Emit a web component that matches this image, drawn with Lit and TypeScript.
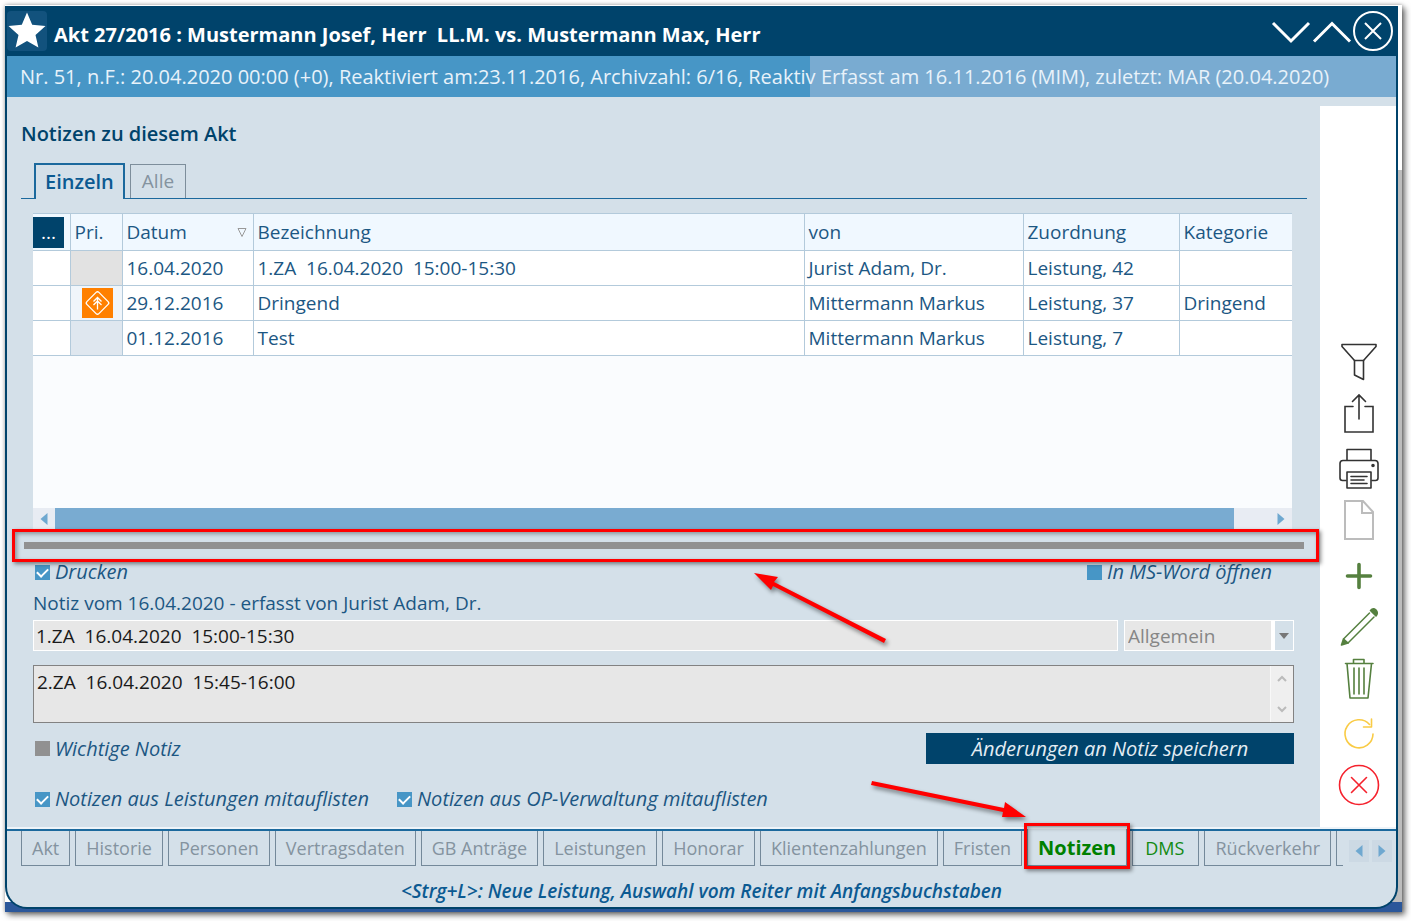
import { LitElement, html, css, svg } from "lit";
import { customElement, state } from "lit/decorators.js";
import { classMap } from "lit/directives/class-map.js";

interface Note {
  date: string;
  title: string;
  author: string;
  link: string;
  category: string;
  priority: "none" | "urgent" | "plain";
}

const NOTES: Note[] = [
  { date: "16.04.2020", title: "1.ZA  16.04.2020  15:00-15:30", author: "Jurist Adam, Dr.", link: "Leistung, 42", category: "", priority: "none" },
  { date: "29.12.2016", title: "Dringend", author: "Mittermann Markus", link: "Leistung, 37", category: "Dringend", priority: "urgent" },
  { date: "01.12.2016", title: "Test", author: "Mittermann Markus", link: "Leistung, 7", category: "", priority: "plain" },
];

const SECTIONS = [
  "Akt", "Historie", "Personen", "Vertragsdaten", "GB Anträge", "Leistungen", "Honorar",
  "Klientenzahlungen", "Fristen", "Notizen", "DMS", "Rückverkehr",
];

const icon = (body: unknown, label: string, cls: string) => html`
  <button class="tool ${cls}" aria-label=${label}>
    <svg viewBox="0 0 42 42" width="42" height="42" fill="none" stroke="currentColor" stroke-width="1.6"
      stroke-linejoin="round" stroke-linecap="round">${body}</svg>
  </button>`;

const FILTER = svg`<path d="M4 3.5H38V5.5L25.5 19.5H16.5L4 5.500Z"/><path d="M16.500 19.500V34L25.500 38.500V19.500"/>`;
const EXPORT = svg`<path d="M15 14.500H7V40H35V14.500H27M21 27V3M14.500 9.500L21 3L27.500 9.500" stroke-linejoin="miter"/>`;
const PRINT = svg`<path d="M9 12.500V1.500H33V12.500M8 32.500H4.500Q2 32.500 2 30V15.500Q2 12.500 5 12.500H37Q40 12.500 40 15.500V30Q40 32.500 37.500 32.500H34"/>
  <path d="M9 24H33V40H9Z"/><path d="M13 28.500H29M13 32H26M13 35.500H29"/><circle cx="35" cy="17.500" r="1" fill="currentColor"/>`;
const PAGE = svg`<path d="M7 2H25L35 13V40H7ZM24 2V14H35" stroke-width="2" stroke-linejoin="miter"/>`;
const PLUS = svg`<path d="M21 9.500V32.500M9.500 21H32.500" stroke-width="3.600"/>`;
const PENCIL = svg`<path d="M5.500 33L31.500 7M10 37L36 11" stroke-width="1.500"/>
  <path d="M32.500 4.500Q35 1.500 38 4Q40.500 7 38 10ZM3.500 39L5.500 33L10 37Z" fill="currentColor"/>`;
const TRASH = svg`<path d="M7.500 6.500H35M9 6.500L12 41H30L33.500 6.500M15.500 6V2.500H26V6M16 11V37M21 11V37M26 11V37"/>`;
const RELOAD = svg`<path d="M35 21A14 14 0 1 1 31.500 11.500M33.500 6V14H25.500"/>`;
const CANCEL = svg`<circle cx="21" cy="21" r="19.500"/><path d="M13.500 13.500L28.500 28.500M28.500 13.500L13.500 28.500"/>`;

@customElement("app-root")
export class AppRoot extends LitElement {
  @state() private view = "Einzeln";
  @state() private section = "Notizen";

  static styles = css`
    :host { display: block; font: 19px/26px "Open Sans", "Noto Sans", sans-serif; color: #1c5783; }
    * { box-sizing: border-box; }
    button, input, select, textarea { font: inherit; color: inherit; margin: 0; border-radius: 0; }
    button { background: none; border: 0; padding: 0; cursor: pointer; }
    svg { display: block; }

    .page { min-height: 100vh; display: flex; flex-direction: column; padding: 5px 9px 9px 5px; background: #fff; }
    .desktop {
      flex: 1; display: flex; flex-direction: column; padding: 1px 4px 3px 0;
      background: linear-gradient(#2b579a, #2b579a) bottom / 100% 10px no-repeat,
        linear-gradient(#fff 165px, #bdbdbd 165px) right / 20px 100% no-repeat, #fff;
      box-shadow: 3px 3px 6px rgba(0, 0, 0, .55), 0 0 4px rgba(0, 0, 0, .3);
    }
    .window {
      flex: 1; display: flex; flex-direction: column; position: relative; overflow: hidden;
      border: 2px solid #00436b; border-top: 0; border-radius: 0 0 22px 22px; background: #d4e0e9;
    }

    .title { height: 50px; display: flex; align-items: center; gap: 7px; background: #00436b; color: #fff; padding-right: 3px; }
    .star { width: 40px; height: 40px; border-radius: 4px; background: #12527d; }
    .title h1 { flex: 1; margin: 8px 0 0; font-size: 20px; font-weight: 700; white-space: pre; }
    .controls { display: flex; }

    .status { display: grid; grid-template-columns: 803fr 586fr; height: 41px; font-size: 20px; line-height: 42px; color: #e8f2fa; background: linear-gradient(90deg, #4796c6 0 57.8%, #79abd1 57.8%); }
    .status span { min-width: 0; white-space: nowrap; }
    .status .left { padding-left: 13px; }
    .status .right { padding-left: 11px; }

    .body { flex: 1; display: grid; grid-template-columns: 1fr 76px; }
    .main { display: flex; flex-direction: column; padding: 24px 0 20px; }
    .main h2 { margin: 0 0 16px 14px; font-size: 20px; line-height: 26px; font-weight: 600; color: #00436b; }

    .views { display: flex; align-items: flex-end; gap: 5px; height: 36px; margin: 0 13px 14px 14px; padding-left: 13px; border-bottom: 1px solid #1b699d; }
    .view { height: 34px; padding: 0 11px 2px; border: 1px solid #7d8e9b; border-bottom: 0; color: #84939f; }
    .view.active { height: 36px; margin-bottom: -1px; padding: 0 9px; border: 2px solid #1b699d; border-bottom: 0; background: #d4e0e9; color: #0b5a92; font-size: 20px; font-weight: 600; }

    .list { flex: 1; display: flex; flex-direction: column; margin: 0 28px 0 26px; background: #fafcfe; }
    table { width: 100%; table-layout: fixed; border-collapse: collapse; }
    th, td { height: 35px; padding: 0 3px 0 4px; text-align: left; font-weight: 400; white-space: pre; border: 1px solid #b3cadb; overflow: hidden; }
    th { height: 37px; background: #f0f8ff; }
    td { background: #fff; }
    th:first-child, td:first-child { border-left: 0; padding: 0; }
    th:last-child, td:last-child { border-right: 0; }
    .c-menu { width: 37px; } .c-pri { width: 52px; } .c-date { width: 131px; }
    .c-author { width: 219px; } .c-link { width: 156px; } .c-cat { width: 113px; }
    .menu { display: block; width: 31px; height: 31px; background: #00436b; color: #fff; line-height: 26px; }
    .sortable { display: flex; justify-content: space-between; align-items: center; padding-right: 3px; }
    .pri { padding: 0 0 0 11px; }
    .pri.none { background: #e2e2e2; } .pri.plain { background: #dfe7ef; } .pri.urgent { background: #f0f5fa; }
    .scroll { display: flex; height: 21px; margin-top: auto; background: #e8ecf3; }
    .scroll button { width: 22px; display: grid; place-items: center; color: #6fa8d0; }
    .thumb { flex: 1; margin-right: 36px; background: #79abd1; }

    .splitter { position: relative; height: 33px; padding: 13px 16px 13px 17px; }
    .splitter hr { height: 7px; margin: 0; border: 0; background: #919191; }
    .mark { position: absolute; border: 3px solid #f00; box-shadow: 2px 2px 4px rgba(0, 0, 0, .45), inset 2px 2px 4px rgba(0, 0, 0, .35); pointer-events: none; }
    .mark.around-splitter { inset: 0 1px 0 5px; }
    .mark.around-tab { inset: -6px -4px -4px -4px; z-index: 1; }
    .arrow { position: absolute; overflow: visible; filter: drop-shadow(2px 3px 2px rgba(0, 0, 0, .45)); pointer-events: none; }
    .arrow.one { left: 747px; bottom: 264px; }
    .arrow.two { left: 864px; bottom: 88px; }

    .form { display: flex; flex-direction: column; padding: 0 26px; }
    .row { display: flex; justify-content: space-between; align-items: center; }
    .check { display: flex; align-items: center; gap: 5px; padding-left: 2px; height: 20px; font-size: 20px; font-style: italic; line-height: 20px; white-space: nowrap; }
    .check input { appearance: none; width: 15px; height: 15px; background: #4796c6; display: grid; place-items: center; }
    .check input:checked::after { content: ""; width: 9px; height: 5px; margin-top: -2px; border: solid #fff; border-width: 0 0 2px 2px; transform: rotate(-45deg); }
    .check.muted input { background: #919191; }
    .word { padding-right: 22px; }
    .caption { margin: 8px 0 4px; }
    .fields { gap: 6px; }
    .subject { flex: 1; min-width: 0; height: 31px; padding: 0 2px; border: 1px solid #fff; background: #e7e7e7; color: #1a1a1a; }
    .select { display: flex; position: relative; width: 170px; }
    .select select { appearance: none; width: 100%; height: 31px; padding: 0 3px; border: 1px solid #fff; background: #e7e7e7; color: #868686; }
    .drop { position: absolute; right: 1px; top: 1px; bottom: 1px; width: 22px; display: grid; place-items: center; border-left: 4px solid #fff; background: #d4e0e9; pointer-events: none; }
    .memo { display: flex; height: 58px; margin: 14px 0 10px; border: 1px solid #828282; background: #e7e7e7; }
    .memo textarea { flex: 1; resize: none; border: 0; padding: 3px 3px; background: transparent; color: #1a1a1a; overflow: hidden; outline: 0; white-space: pre; }
    .memo-scroll { width: 23px; display: flex; flex-direction: column; justify-content: space-between; align-items: center; padding: 9px 0; background: #efefef; border-left: 1px solid #f8f8f8; }
    .save { width: 368px; height: 31px; background: #00436b; color: #e4edf4; font-size: 20px; font-style: italic; text-align: center; }
    .options { display: flex; gap: 26px; margin-top: 25px; }

    .tools { display: flex; flex-direction: column; align-items: center; gap: 9px; margin-top: 9px; padding: 0 0 23px 2px; background: #fff; justify-content: flex-end; }
    .tool { color: #333; }
    .tool.grey { color: #bcbcbc; } .tool.green { color: #55803f; } .tool.yellow { color: #f9cb45; } .tool.red { color: #f5222d; }
    .tool.low { margin-top: 5px; }

    .nav { display: flex; gap: 5px; position: relative; padding-left: 14px; border-top: 2px solid #1b699d; box-shadow: 0 -2px #eef4f9; font-size: 18px; }
    .tab { position: relative; height: 35px; padding: 0 10px; line-height: 35px; border: 1px solid #74899a; border-top: 0; color: #84939f; white-space: nowrap; flex: none; }
    .tab.linked { color: #128a12; padding: 0 14px 0 12px; }
    .tab.active { color: #008000; font-size: 20px; font-weight: 700; margin-top: -2px; height: 37px; padding: 0 10px; background: #d4e0e9; }
    .tab.more { width: 7px; padding: 0; border-right: 0; }
    .pager { position: absolute; right: 4px; top: 9px; display: flex; gap: 3px; }
    .pager button { width: 20px; height: 22px; display: grid; place-items: center; background: #ccd9e4; color: #6fa8d0; }
    .hint { margin: 0; padding: 15px 0 6px; line-height: 20px; text-align: center; font-weight: 600; font-style: italic; color: #0b5a92; }
  `;

  private check(label: string, checked: boolean, cls = "") {
    return html`<label class="check ${cls}"><input type="checkbox" .checked=${checked} />${label}</label>`;
  }

  private triangle(dir: "left" | "right") {
    return html`<svg width="8" height="12" fill="currentColor"><path d=${dir === "left" ? "M7.500 0V12L0.500 6Z" : "M0.500 0V12L7.500 6Z"} /></svg>`;
  }

  private row(n: Note) {
    return html`<tr>
      <td></td>
      <td class="pri ${n.priority}">${n.priority === "urgent"
        ? html`<svg width="31" height="30" viewBox="0 0 31 30" fill="none" stroke="#fff" stroke-width="1.300">
            <rect width="31" height="30" fill="#ff8000" stroke="none" />
            <rect x="7" y="6.500" width="17" height="17" rx="2" transform="rotate(45 15.500 15)" />
            <path d="M11.500 13.500L15.500 9.500L19.500 13.500M11.500 17L15.500 13L19.500 17M15.500 10V21.500" />
          </svg>` : ""}</td>
      <td>${n.date}</td><td>${n.title}</td><td>${n.author}</td><td>${n.link}</td><td>${n.category}</td>
    </tr>`;
  }

  render() {
    return html`<div class="page"><div class="desktop"><div class="window">
      <header class="title">
        <svg class="star" viewBox="0 0 40 40"><path fill="#fff" d="M20 1.500L25.200 13.700L38.500 15L28.500 23.900L31.400 36.500L20 30L8.600 36.500L11.500 23.900L1.500 15L14.800 13.700Z" /></svg>
        <h1>${"Akt 27/2016 : Mustermann Josef, Herr  LL.M. vs. Mustermann Max, Herr"}</h1>
        <div class="controls">
          <button aria-label="Nächster Akt"><svg width="41" height="42" fill="none" stroke="#fff" stroke-width="3"><path d="M2 13L20 31L38 13" /></svg></button>
          <button aria-label="Voriger Akt"><svg width="41" height="42" fill="none" stroke="#fff" stroke-width="3"><path d="M2 31.500L20 13.500L38 31.500" /></svg></button>
          <button aria-label="Schließen"><svg width="40" height="42" fill="none" stroke="#fff" stroke-width="2"><circle cx="20" cy="21" r="19" /><path d="M12 13L28 29M28 13L12 29" /></svg></button>
        </div>
      </header>
      <div class="status">
        <span class="left">Nr. 51, n.F.: 20.04.2020 00:00 (+0), Reaktiviert am:23.11.2016, Archivzahl: 6/16, Reaktiv</span>
        <span class="right">Erfasst am 16.11.2016 (MIM), zuletzt: MAR (20.04.2020)</span>
      </div>
      <div class="body">
        <main class="main">
          <h2>Notizen zu diesem Akt</h2>
          <div class="views">
            ${["Einzeln", "Alle"].map((v) => html`<button class=${classMap({ view: true, active: v === this.view })} @click=${() => (this.view = v)}>${v}</button>`)}
          </div>
          <div class="list">
            <table>
              <colgroup><col class="c-menu" /><col class="c-pri" /><col class="c-date" /><col /><col class="c-author" /><col class="c-link" /><col class="c-cat" /></colgroup>
              <thead><tr>
                <th><button class="menu">...</button></th>
                <th>Pri.</th>
                <th><div class="sortable">Datum<svg width="10" height="11" fill="none" stroke="#999"><path d="M1 1.500H9L5 9.500Z" /></svg></div></th>
                <th>Bezeichnung</th><th>von</th><th>Zuordnung</th><th>Kategorie</th>
              </tr></thead>
              <tbody>${NOTES.map((n) => this.row(n))}</tbody>
            </table>
            <div class="scroll">
              <button aria-label="Nach links">${this.triangle("left")}</button>
              <div class="thumb"></div>
              <button aria-label="Nach rechts">${this.triangle("right")}</button>
            </div>
          </div>
          <div class="splitter"><hr /><div class="mark around-splitter"></div></div>
          <div class="form">
            <div class="row">${this.check("Drucken", true)}${this.check("In MS-Word öffnen", false, "word")}</div>
            <label class="caption" for="subject">Notiz vom 16.04.2020 - erfasst von Jurist Adam, Dr.</label>
            <div class="row fields">
              <input class="subject" id="subject" type="text" .value=${"1.ZA  16.04.2020  15:00-15:30"} />
              <div class="select">
                <select aria-label="Kategorie"><option>Allgemein</option></select>
                <div class="drop"><svg width="10" height="6" fill="#777"><path d="M0 0H10L5 6Z" /></svg></div>
              </div>
            </div>
            <div class="memo">
              <textarea aria-label="Notiztext" .value=${"2.ZA  16.04.2020  15:45-16:00"}></textarea>
              <div class="memo-scroll">
                <svg width="10" height="7" fill="none" stroke="#bbb" stroke-width="2"><path d="M1 6L5 2L9 6" /></svg>
                <svg width="10" height="7" fill="none" stroke="#bbb" stroke-width="2"><path d="M1 1L5 5L9 1" /></svg>
              </div>
            </div>
            <div class="row">${this.check("Wichtige Notiz", false, "muted")}<button class="save">Änderungen an Notiz speichern</button></div>
            <div class="options">${this.check("Notizen aus Leistungen mitauflisten", true)}${this.check("Notizen aus OP-Verwaltung mitauflisten", true)}</div>
          </div>
        </main>
        <aside class="tools">
          ${icon(FILTER, "Filtern", "")}
          ${icon(EXPORT, "Exportieren", "")}
          ${icon(PRINT, "Drucken", "low")}
          ${icon(PAGE, "Neues Dokument", "grey")}
          ${icon(PLUS, "Hinzufügen", "green low")}
          ${icon(PENCIL, "Bearbeiten", "green")}
          ${icon(TRASH, "Löschen", "green")}
          ${icon(RELOAD, "Aktualisieren", "yellow low")}
          ${icon(CANCEL, "Abbrechen", "red")}
        </aside>
      </div>
      <nav class="nav">
        ${SECTIONS.map((s) => html`<button class=${classMap({ tab: true, active: s === this.section, linked: s === "DMS" })}
          @click=${() => (this.section = s)}>${s}${s === "Notizen" ? html`<span class="mark around-tab"></span>` : ""}</button>`)}
        <button class="tab more" aria-label="Weitere"></button>
        <div class="pager">
          <button aria-label="Zurück">${this.triangle("left")}</button>
          <button aria-label="Weiter">${this.triangle("right")}</button>
        </div>
      </nav>
      <p class="hint">&lt;Strg+L&gt;: Neue Leistung, Auswahl vom Reiter mit Anfangsbuchstaben</p>
      <svg class="arrow one" width="134" height="70" fill="#f00"><path d="M0 0L24 4L20 9L132 66L130 70L19 13L17 17Z" /></svg>
      <svg class="arrow two" width="156" height="38" fill="#f00"><path d="M1 0L133 27L134 21L155 36L131 36L132 31L0 4Z" /></svg>
    </div></div></div>`;
  }
}
